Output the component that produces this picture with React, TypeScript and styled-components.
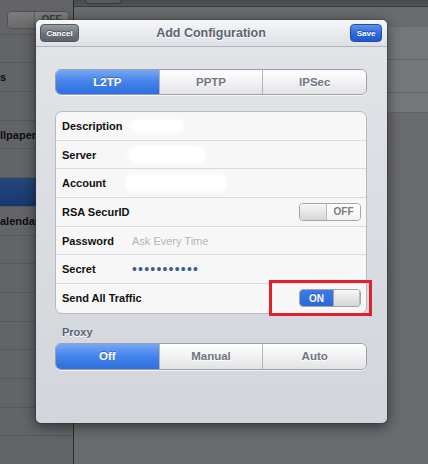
import React from "react";
import styled, { createGlobalStyle, css } from "styled-components";

const GlobalStyle = createGlobalStyle`
  * { box-sizing: border-box; }
  body {
    margin: 0;
    background: #6a6d74;
    font-family: "Liberation Sans", Arial, Helvetica, sans-serif;
  }
`;

const Page = styled.div`
  position: relative;
  width: 428px;
  height: 464px;
  overflow: hidden;
  display: flex;
`;

/* ---------- background: settings app behind the sheet ---------- */

const Sidebar = styled.div`
  width: 74px;
  flex: none;
  padding-top: 6px;
  background: #c5c9d1;
  border-right: 1px solid #55575d;
  display: flex;
  flex-direction: column;
`;

const SideRow = styled.div<{ $selected?: boolean; $inset?: number }>`
  height: 28.7px;
  flex: none;
  display: flex;
  align-items: center;
  padding-left: ${(p) => p.$inset ?? 0}px;
  white-space: nowrap;
  border-bottom: 1px solid #adb1b9;
  background: ${(p) => (p.$selected ? "linear-gradient(#4a90f4, #2c70e0)" : "transparent")};
`;

const SideLabel = styled.span`
  font-size: 11px;
  font-weight: 700;
  color: #1c1d20;
`;

const Main = styled.div`
  flex: 1;
  display: flex;
  flex-direction: column;
  background: #d4d7de;
`;

const NavBar = styled.div`
  height: 7px;
  flex: none;
  padding-left: 11px;
  background: linear-gradient(#8e939c, #a2a6ae);
  border-bottom: 1px solid #6e7279;
`;

const NavButton = styled.div`
  width: 37px;
  height: 4px;
  border: 1px solid #6b6f76;
  border-top: none;
  border-radius: 0 0 4px 4px;
  background: #b1b5bc;
`;

const Group = styled.div`
  margin-top: 20px;
  margin-left: 30px;
  display: flex;
  flex-direction: column;
  background: #eceef2;
`;

const GroupRow = styled.div<{ $h: number }>`
  height: ${(p) => p.$h}px;
  border-bottom: 1px solid #c3c6cc;
`;

const Backdrop = styled.div`
  position: absolute;
  inset: 0;
  background: rgba(0, 0, 0, 0.5);
`;

/* ---------- the sheet ---------- */

const Sheet = styled.div`
  position: absolute;
  left: 36px;
  top: 20px;
  width: 351px;
  height: 403px;
  border-radius: 5px;
  background: linear-gradient(#e2e4e8, #d2d5db);
  box-shadow: 0 3px 14px rgba(0, 0, 0, 0.55), 0 0 0 1px rgba(60, 62, 68, 0.35);
  display: flex;
  flex-direction: column;
`;

const Header = styled.div`
  height: 27px;
  flex: none;
  display: grid;
  grid-template-columns: 1fr auto 1fr;
  align-items: center;
  padding: 0 5px 0 4px;
  border-radius: 5px 5px 0 0;
  background: linear-gradient(#f6f7f9, #dcdfe4);
  border-bottom: 1px solid #b1b5bc;
`;

const Title = styled.div`
  font-size: 12.5px;
  font-weight: 700;
  color: #5d6573;
  text-shadow: 0 1px 0 #fff;
`;

const BarButton = styled.button<{ $primary?: boolean }>`
  height: 18px;
  padding: 0;
  border-radius: 4px;
  font-family: inherit;
  font-size: 8px;
  font-weight: 700;
  color: #fff;
  text-shadow: 0 -1px 0 rgba(0, 0, 0, 0.35);
  justify-self: ${(p) => (p.$primary ? "end" : "start")};
  ${(p) =>
    p.$primary
      ? css`
          width: 32px;
          border: 1px solid #1c4fae;
          background: linear-gradient(#5b93ec, #2d67dc 55%, #2057cc);
        `
      : css`
          width: 39px;
          border: 1px solid #53575e;
          background: linear-gradient(#979ba2, #6e737b 55%, #5e636b);
        `}
`;

const Body = styled.div`
  display: flex;
  flex-direction: column;
  padding: 22px 20px 0 19px;
`;

const Segmented = styled.div<{ $h: number }>`
  height: ${(p) => p.$h}px;
  display: flex;
  border: 1px solid #9ca0a8;
  border-radius: 6px;
  overflow: hidden;
  box-shadow: 0 1px 0 rgba(255, 255, 255, 0.7);
`;

const Segment = styled.div<{ $on?: boolean }>`
  flex: 1;
  display: flex;
  align-items: center;
  justify-content: center;
  font-size: 11.5px;
  font-weight: 700;
  & + & {
    border-left: 1px solid #b2b5bb;
  }
  ${(p) =>
    p.$on
      ? css`
          color: #fff;
          text-shadow: 0 -1px 0 rgba(0, 0, 0, 0.3);
          background: linear-gradient(#76a7f2, #4282ea 50%, #2f6fde);
        `
      : css`
          color: #717583;
          text-shadow: 0 1px 0 #fff;
          background: linear-gradient(#ffffff, #f2f2f3 50%, #e1e2e5);
        `}
`;

const Table = styled.div`
  margin-top: 16px;
  border: 1px solid #b6bac1;
  border-radius: 7px;
  background: #f7f7f7;
  overflow: hidden;
`;

const Row = styled.div`
  height: 28.7px;
  display: grid;
  grid-template-columns: 70px 1fr auto;
  align-items: center;
  padding: 0 5px 0 6px;
  border-bottom: 1px solid #d9dadd;
  &:last-child {
    border-bottom: none;
  }
`;

const Label = styled.div`
  font-size: 11px;
  font-weight: 700;
  color: #111;
  white-space: nowrap;
`;

const Value = styled.div<{ $muted?: boolean }>`
  font-size: 11px;
  color: ${(p) => (p.$muted ? "#b3b5b9" : "#3a5a8c")};
`;

const Dots = styled.div`
  font-size: 14px;
  letter-spacing: 1.2px;
  color: #3d5b8d;
  line-height: 1;
`;

const Smudge = styled.div<{ $w: number; $h: number; $x: number }>`
  width: ${(p) => p.$w}px;
  height: ${(p) => p.$h}px;
  margin-left: ${(p) => p.$x}px;
  border-radius: 6px;
  background: #ffffff;
  box-shadow: 0 0 4px 2px #ffffff;
`;

const Switch = styled.div`
  width: 62px;
  height: 18px;
  display: flex;
  border: 1px solid #a3a5aa;
  border-radius: 4px;
  overflow: hidden;
  font-size: 10px;
  font-weight: 700;
`;

const Knob = styled.div<{ $w: number }>`
  width: ${(p) => p.$w}px;
  flex: none;
  background: linear-gradient(#f7f7f7, #d6d6d8);
  border-right: 1px solid #b9bbbf;
`;

const SwitchText = styled.div<{ $on?: boolean }>`
  flex: 1;
  display: flex;
  align-items: center;
  justify-content: center;
  ${(p) =>
    p.$on
      ? css`
          color: #fff;
          background: linear-gradient(#3d7ce6, #2a68d8);
          border-right: 1px solid #9fa3aa;
          text-shadow: 0 -1px 0 rgba(0, 0, 0, 0.3);
        `
      : css`
          color: #7b7c80;
          background: linear-gradient(#ffffff, #f1f1f2);
        `}
`;

const SectionLabel = styled.div`
  margin: 12px 0 5px 7px;
  font-size: 11px;
  font-weight: 700;
  color: #5b6271;
  text-shadow: 0 1px 0 #fff;
`;

const Highlight = styled.div`
  position: absolute;
  left: 269px;
  top: 280px;
  width: 103px;
  height: 36px;
  border: 3px solid #e2202b;
`;

function Toggle({ on }: { on: boolean }) {
  return on ? (
    <Switch>
      <SwitchText $on>ON</SwitchText>
      <Knob $w={26} />
    </Switch>
  ) : (
    <Switch>
      <Knob $w={27} />
      <SwitchText>OFF</SwitchText>
    </Switch>
  );
}

const sideRows: { text?: string; selected?: boolean; toggle?: boolean }[] = [
  { toggle: true },
  {},
  { text: "s" },
  {},
  { text: "llpaper" },
  {},
  { selected: true },
  { text: "alendar" },
  {},
  {},
  {},
  {},
  {},
  {},
  {},
  {},
];

export default function App() {
  return (
    <Page>
      <GlobalStyle />
      <Sidebar>
        {sideRows.map((r, i) => (
          <SideRow key={i} $selected={r.selected} $inset={r.toggle ? 7 : 0}>
            {r.toggle && <Toggle on={false} />}
            {r.text && <SideLabel>{r.text}</SideLabel>}
          </SideRow>
        ))}
      </Sidebar>
      <Main>
        <NavBar>
          <NavButton />
        </NavBar>
        <Group>
          <GroupRow $h={33} />
          <GroupRow $h={33} />
          <GroupRow $h={20} />
        </Group>
      </Main>
      <Backdrop />

      <Sheet>
        <Header>
          <BarButton>Cancel</BarButton>
          <Title>Add Configuration</Title>
          <BarButton $primary>Save</BarButton>
        </Header>
        <Body>
          <Segmented $h={26}>
            <Segment $on>L2TP</Segment>
            <Segment>PPTP</Segment>
            <Segment>IPSec</Segment>
          </Segmented>

          <Table>
            <Row>
              <Label>Description</Label>
              <Smudge $w={50} $h={10} $x={0} />
            </Row>
            <Row>
              <Label>Server</Label>
              <Smudge $w={74} $h={13} $x={-2} />
            </Row>
            <Row>
              <Label>Account</Label>
              <Smudge $w={98} $h={14} $x={-5} />
            </Row>
            <Row>
              <Label>RSA SecurID</Label>
              <span />
              <Toggle on={false} />
            </Row>
            <Row>
              <Label>Password</Label>
              <Value $muted>Ask Every Time</Value>
            </Row>
            <Row>
              <Label>Secret</Label>
              <Dots>•••••••••••</Dots>
            </Row>
            <Row>
              <Label>Send All Traffic</Label>
              <span />
              <Toggle on />
            </Row>
          </Table>

          <SectionLabel>Proxy</SectionLabel>
          <Segmented $h={27}>
            <Segment $on>Off</Segment>
            <Segment>Manual</Segment>
            <Segment>Auto</Segment>
          </Segmented>
        </Body>
      </Sheet>

      <Highlight />
    </Page>
  );
}
